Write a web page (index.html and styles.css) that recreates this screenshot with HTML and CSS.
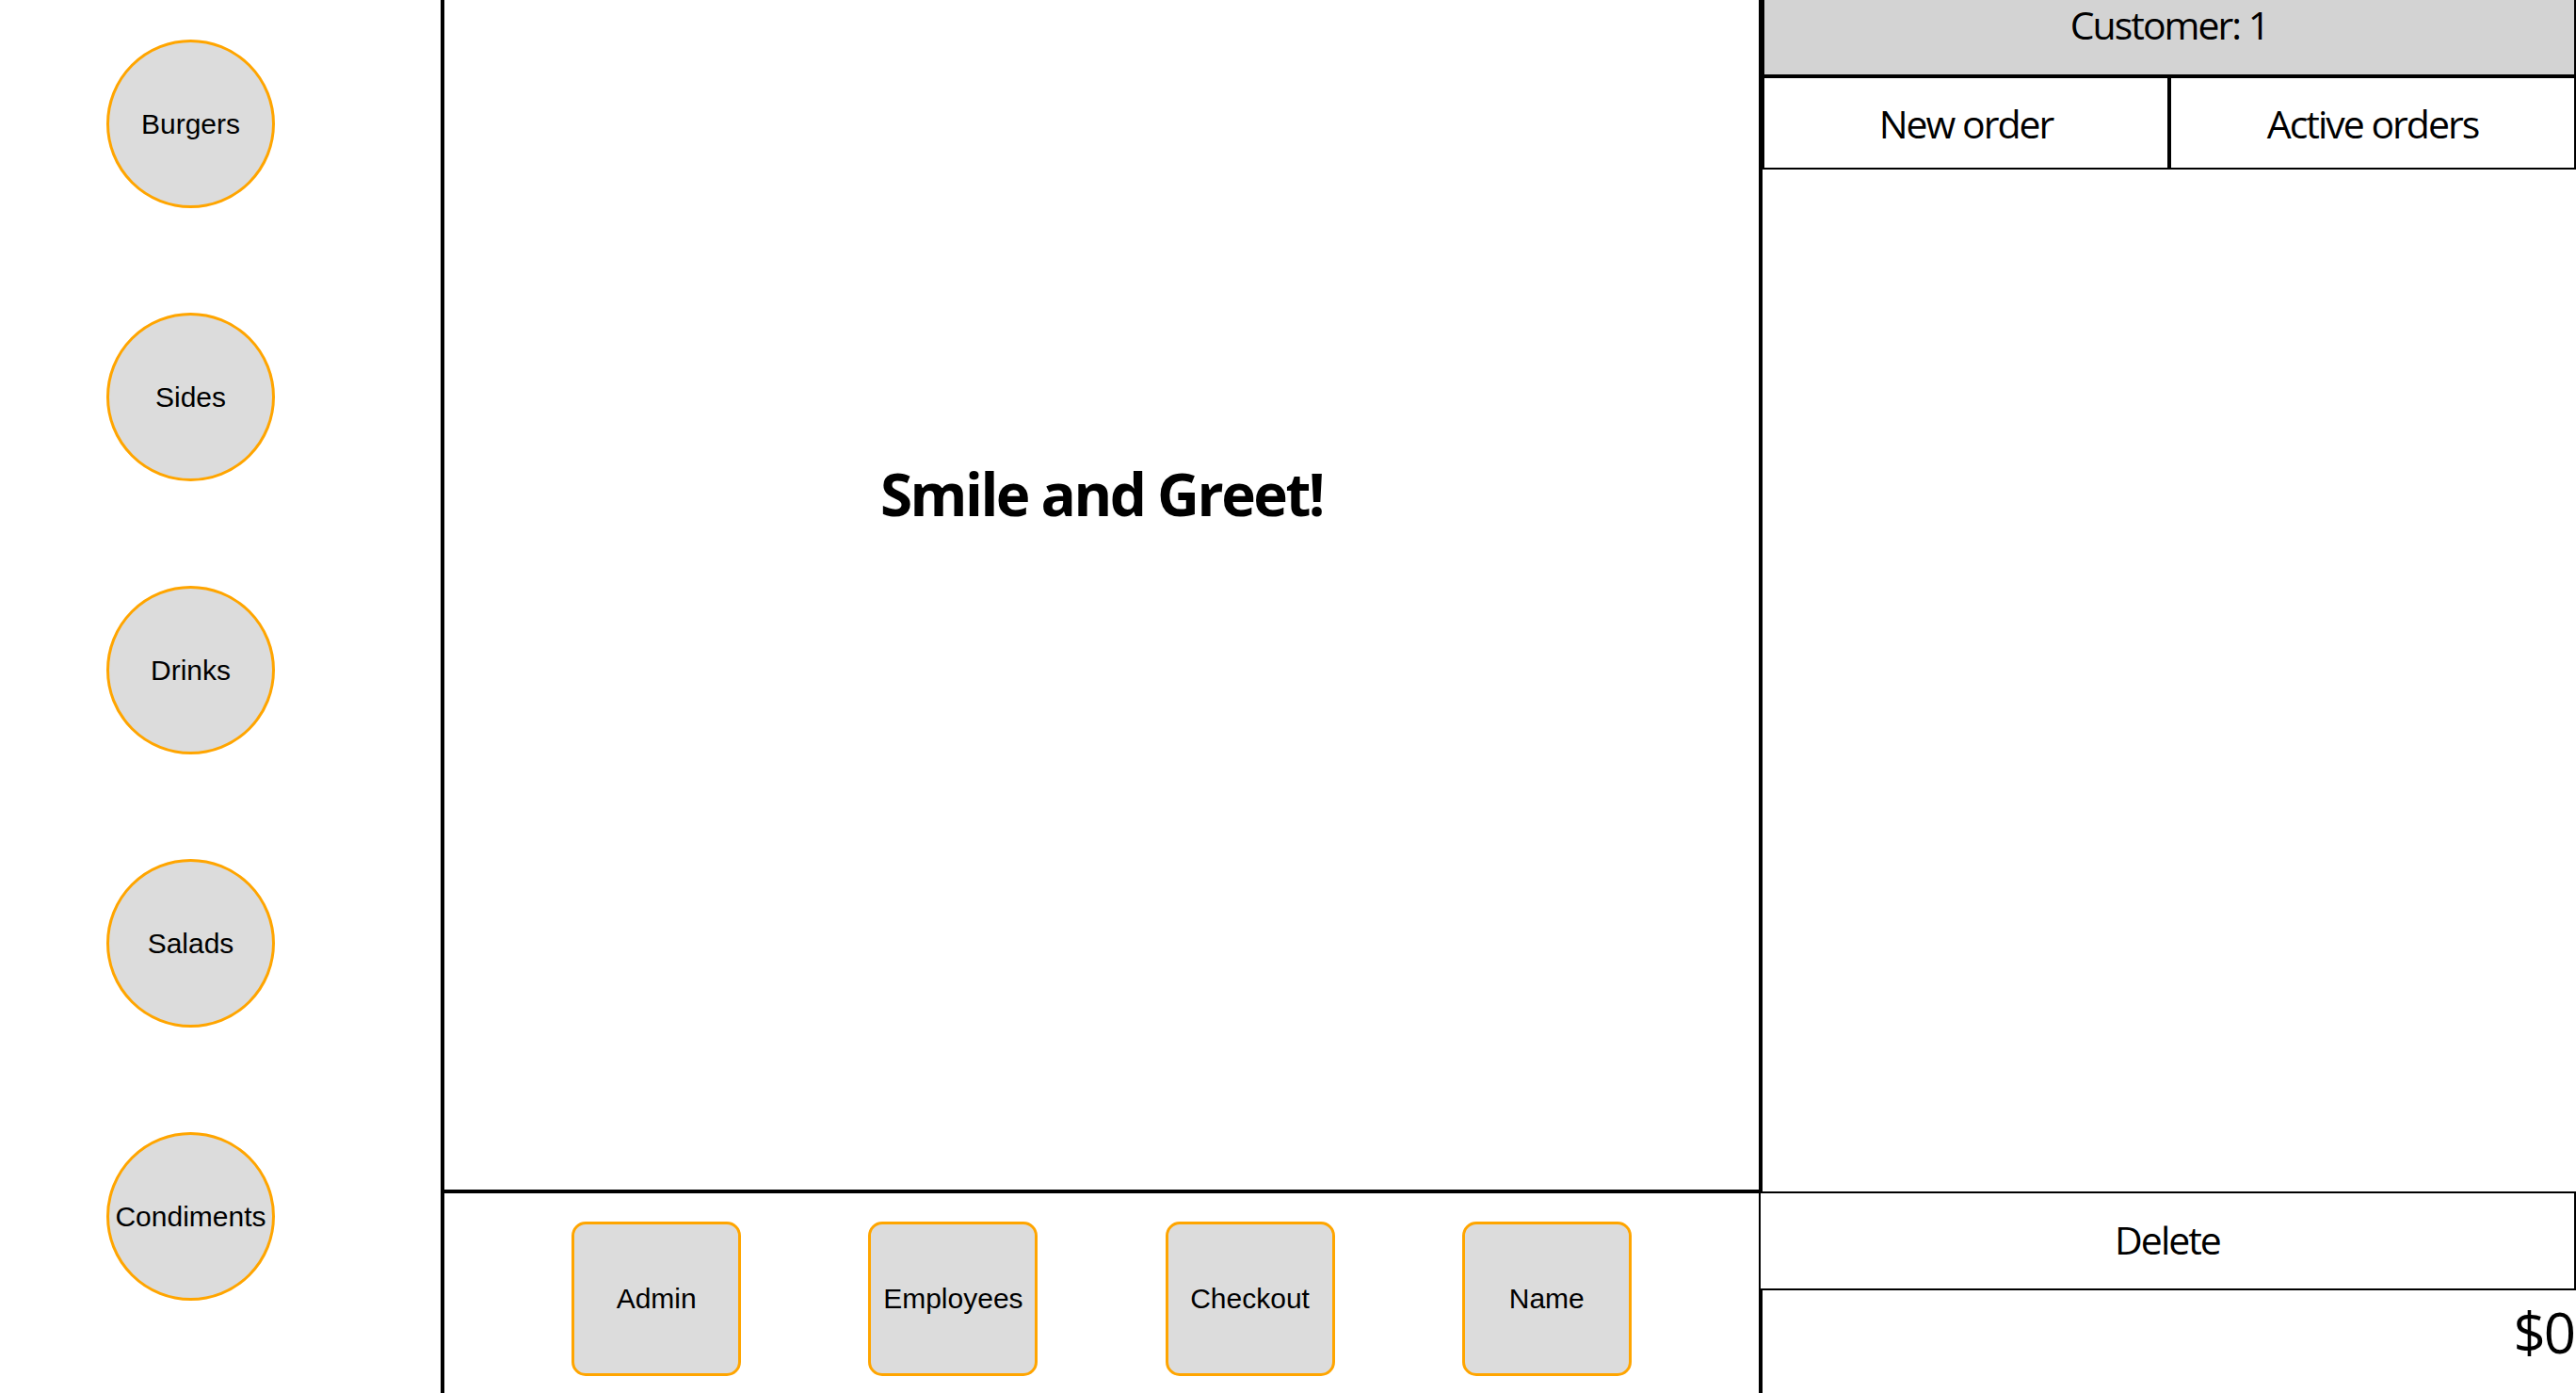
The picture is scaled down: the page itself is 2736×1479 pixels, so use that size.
FILE: index.html
```html
<!DOCTYPE html>
<html lang="en">
<head>
<meta charset="utf-8">
<title>POS</title>
<link rel="stylesheet" href="styles.css">
</head>
<body>
<div class="app">
  <nav class="categories">
    <button class="cat">Burgers</button>
    <button class="cat">Sides</button>
    <button class="cat">Drinks</button>
    <button class="cat">Salads</button>
    <button class="cat">Condiments</button>
  </nav>
  <main class="center">
    <section class="stage">
      <h1 class="greet">Smile and Greet!</h1>
    </section>
    <footer class="actions">
      <button class="act">Admin</button>
      <button class="act">Employees</button>
      <button class="act">Checkout</button>
      <button class="act">Name</button>
    </footer>
  </main>
  <aside class="order">
    <div class="customer">Customer: 1</div>
    <div class="tabs">
      <div class="tab">New order</div>
      <div class="tab">Active orders</div>
    </div>
    <div class="items"></div>
    <div class="delete">Delete</div>
    <div class="total">$0</div>
  </aside>
</div>
</body>
</html>
```
FILE: styles.css
```css
* { box-sizing: border-box; }
html, body { margin: 0; padding: 0; background: #fff; }
body { height: 1479px; overflow: hidden; color: #000; }

.app {
  display: flex;
  height: 1479px;
}

.categories {
  width: 472px;
  flex: none;
  border-right: 4px solid #000;
  display: flex;
  flex-direction: column;
  align-items: flex-start;
  gap: 111px;
  padding: 42px 0 0 113px;
}
.cat {
  width: 179px;
  height: 179px;
  border-radius: 50%;
  border: 3px solid #ffa500;
  background: #dcdcdc;
  font-family: "Liberation Sans", Arial, sans-serif;
  font-size: 30px;
  color: #000;
  padding: 0;
  display: flex;
  align-items: center;
  justify-content: center;
}

.center {
  flex: 1;
  display: flex;
  flex-direction: column;
  min-width: 0;
}
.stage {
  height: 1263px;
  flex: none;
  padding-top: 493px;
  text-align: center;
}
.greet {
  margin: 0;
  font-family: "Open Sans", "Noto Sans", sans-serif;
  font-weight: 700;
  font-size: 62px;
  line-height: 1;
  letter-spacing: -2.5px;
}
.actions {
  flex: 1;
  border-top: 4px solid #000;
  display: flex;
  justify-content: space-evenly;
  align-items: flex-start;
  padding-top: 30px;
}
.act {
  width: 180px;
  height: 164px;
  border: 3px solid #ffa500;
  border-radius: 15px;
  background: #dcdcdc;
  font-family: "Liberation Sans", Arial, sans-serif;
  font-size: 30px;
  color: #000;
  padding: 0;
}

.order {
  width: 868px;
  flex: none;
  border-left: 4px solid #000;
  display: flex;
  flex-direction: column;
  font-family: "Open Sans", "Noto Sans", sans-serif;
  font-size: 41px;
  letter-spacing: -2px;
}
.customer {
  height: 81px;
  flex: none;
  background: #d3d3d3;
  border: 2px solid #000;
  border-top: 0;
  text-align: center;
  line-height: 1;
  padding-top: 6px;
}
.tabs {
  height: 99px;
  flex: none;
  display: flex;
}
.tab {
  flex: 1;
  border: 2px solid #000;
  display: flex;
  align-items: center;
  justify-content: center;
  padding-top: 1px;
}
.items { flex: 1; }
.delete {
  height: 105px;
  flex: none;
  margin-left: -4px;
  background: #fff;
  border: 2px solid #000;
  display: flex;
  align-items: center;
  justify-content: center;
  padding-bottom: 4px;
}
.total {
  height: 109px;
  flex: none;
  text-align: right;
  font-size: 60px;
  line-height: normal;
  padding: 3px 2px 0 0;
}
```
